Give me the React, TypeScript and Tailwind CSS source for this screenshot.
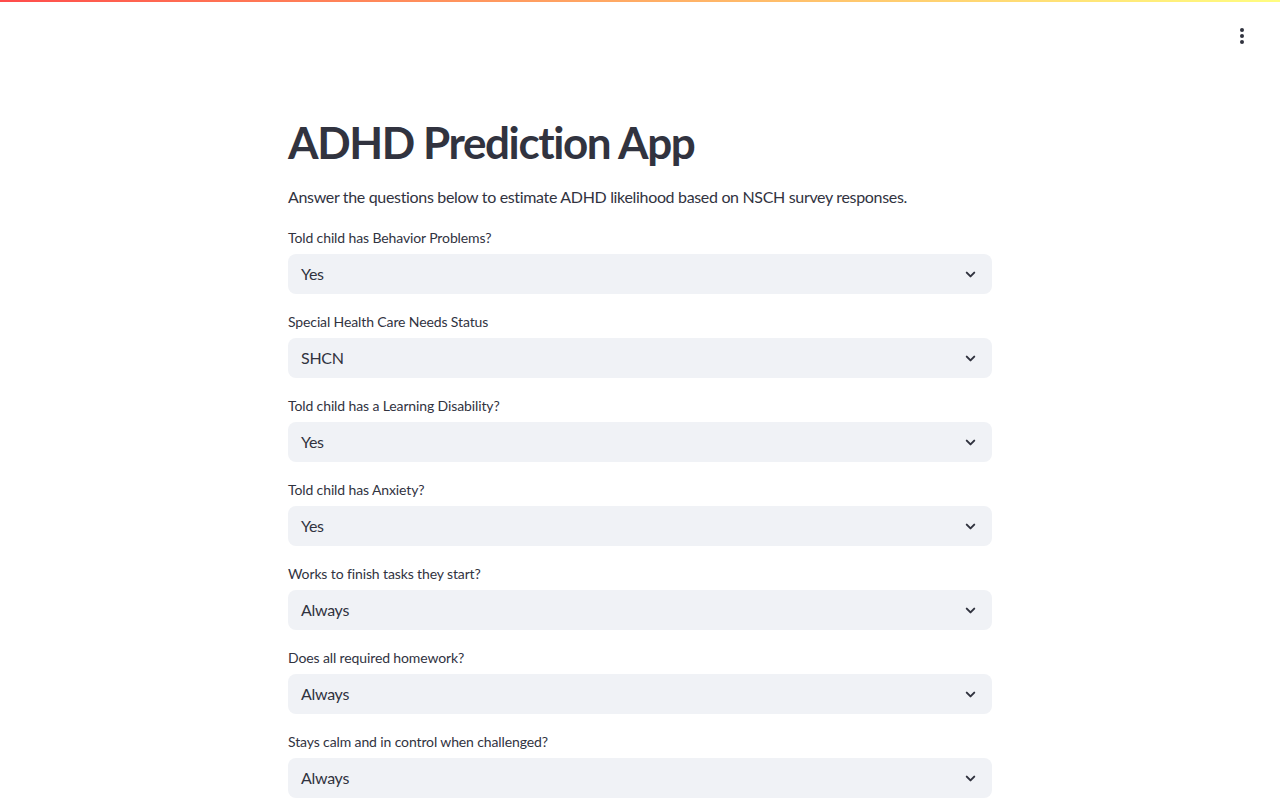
import { ChevronDown } from "lucide-react";

type Question = {
  label: string;
  value: string;
};

const questions: Question[] = [
  { label: "Told child has Behavior Problems?", value: "Yes" },
  { label: "Special Health Care Needs Status", value: "SHCN" },
  { label: "Told child has a Learning Disability?", value: "Yes" },
  { label: "Told child has Anxiety?", value: "Yes" },
  { label: "Works to finish tasks they start?", value: "Always" },
  { label: "Does all required homework?", value: "Always" },
  { label: "Stays calm and in control when challenged?", value: "Always" },
  { label: "Argues too much?", value: "Never" },
];

function SelectBox({ label, value }: Question) {
  return (
    <div className="flex flex-col">
      <label className="h-[23px] text-[14px] leading-[21px] tracking-[-0.12px] text-[#31333f]">{label}</label>
      <div className="mt-[4px] flex h-[40px] items-center justify-between rounded-lg bg-[#f0f2f6] pl-[13px] pr-[14px]">
        <span className="text-[16px] tracking-[-0.3px] text-[#31333f]">{value}</span>
        <ChevronDown className="h-[15px] w-[15px] text-[#31333f]" strokeWidth={3.2} />
      </div>
    </div>
  );
}

export default function App() {
  return (
    <div
      className="relative h-screen overflow-hidden bg-white"
      style={{ fontFamily: '"Source Sans Pro", Lato, "Liberation Sans", sans-serif' }}
    >
      <div className="h-[2px] w-full bg-gradient-to-r from-[#ff4b4b] to-[#fffd80]" />

      <header className="flex h-[68px] items-center justify-end pr-[28px]">
        <button className="flex h-[32px] w-[20px] flex-col items-center justify-center gap-[2px]">
          <span className="h-[4px] w-[4px] rounded-full bg-[#31333f]" />
          <span className="h-[4px] w-[4px] rounded-full bg-[#31333f]" />
          <span className="h-[4px] w-[4px] rounded-full bg-[#31333f]" />
        </button>
      </header>

      <main className="mx-auto w-[704px] pt-[46px]">
        <h1 className="text-[44px] font-bold leading-[53px] tracking-[-1.4px] text-[#31333f]">
          ADHD Prediction App
        </h1>
        <p className="mt-[15px] text-[16px] leading-[26px] tracking-[-0.33px] text-[#31333f]">
          Answer the questions below to estimate ADHD likelihood based on NSCH survey responses.
        </p>
        <div className="mt-[17px] flex flex-col gap-[17px]">
          {questions.map((q) => (
            <SelectBox key={q.label} label={q.label} value={q.value} />
          ))}
        </div>
      </main>
    </div>
  );
}
